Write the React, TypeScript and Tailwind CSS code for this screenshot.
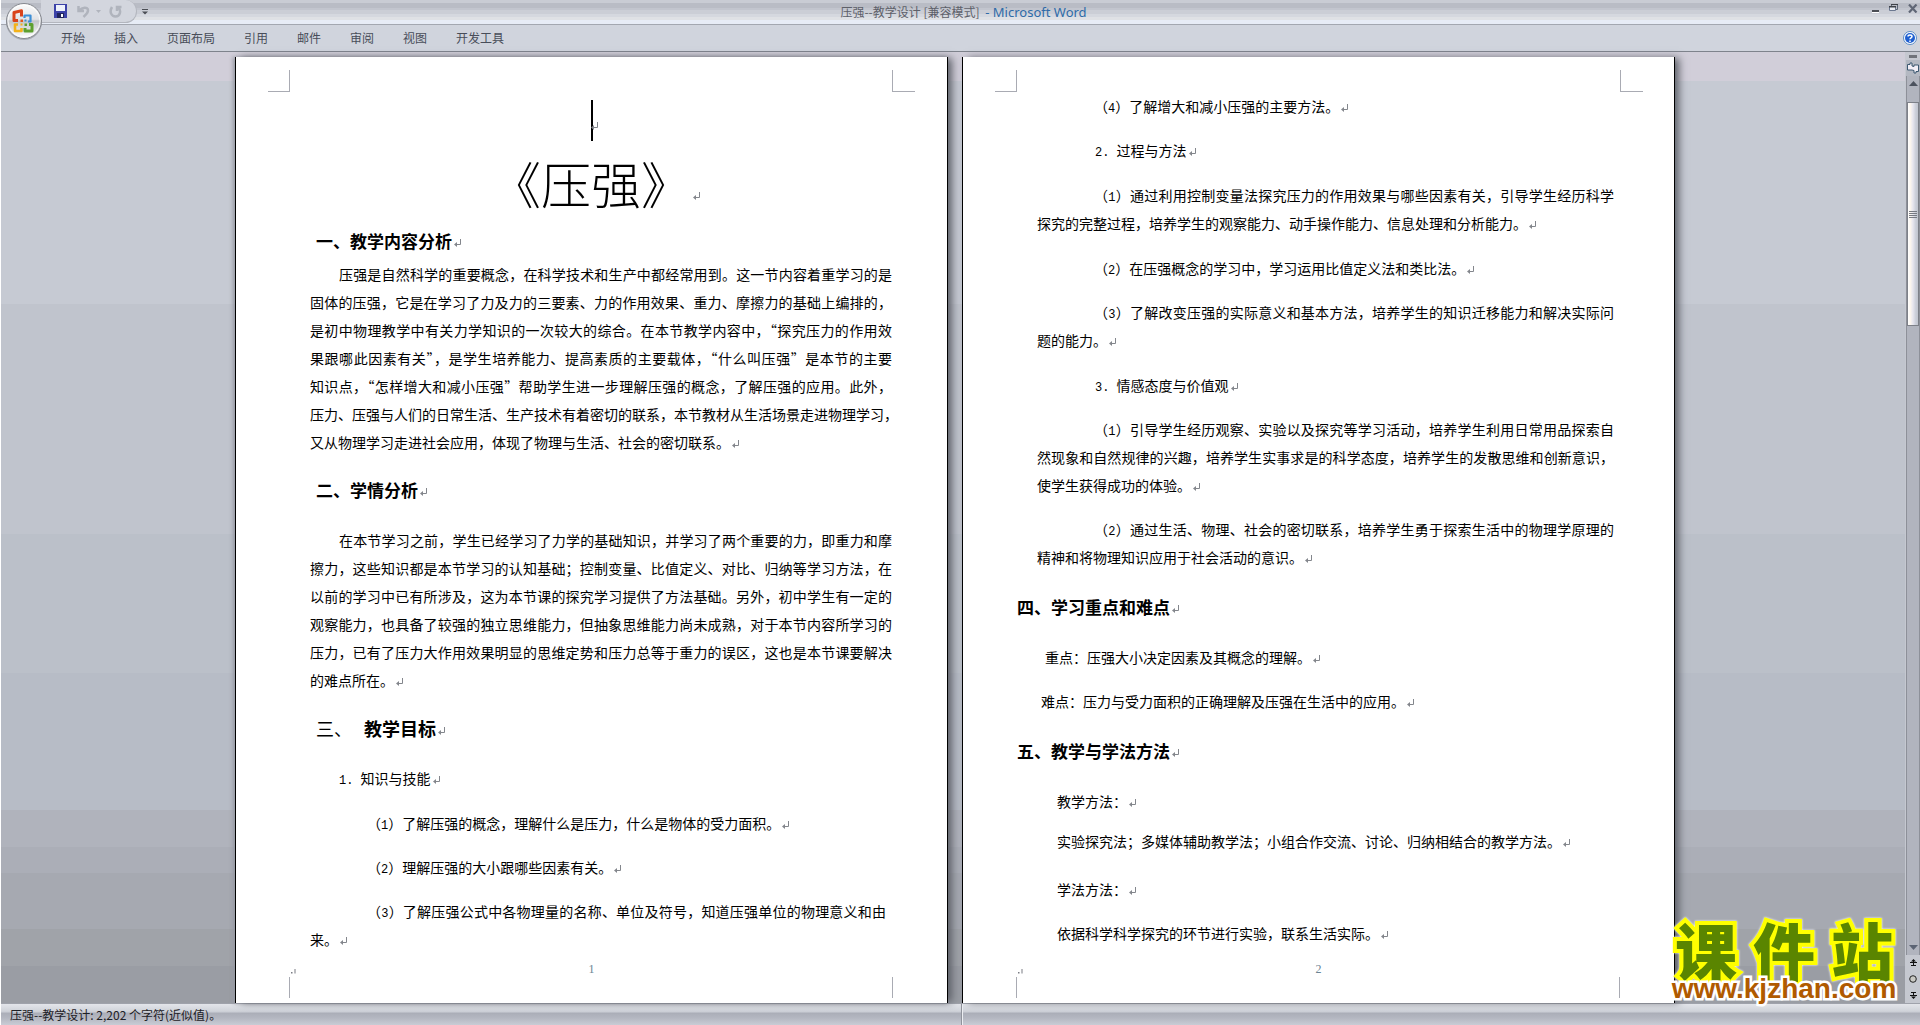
import React from 'react';

type Block = {
  kind: 'text' | 'heading' | 'split';
  className: string;
  lines: string[];
  indent?: string;
};

const TABS = ['开始', '插入', '页面布局', '引用', '邮件', '审阅', '视图', '开发工具'];

const PAGE_ONE: Block[] = [
  { kind: 'heading', className: 'pl-[6px]', lines: ['一、教学内容分析'] },
  {
    kind: 'text',
    className: 'mt-[5px]',
    indent: 'pl-[29px]',
    lines: [
      '压强是自然科学的重要概念，在科学技术和生产中都经常用到。这一节内容着重学习的是',
      '固体的压强，它是在学习了力及力的三要素、力的作用效果、重力、摩擦力的基础上编排的，',
      '是初中物理教学中有关力学知识的一次较大的综合。在本节教学内容中，“探究压力的作用效',
      '果跟哪此因素有关”，是学生培养能力、提高素质的主要载体，“什么叫压强”是本节的主要',
      '知识点，“怎样增大和减小压强”帮助学生进一步理解压强的概念，了解压强的应用。此外，',
      '压力、压强与人们的日常生活、生产技术有着密切的联系，本节教材从生活场景走进物理学习，',
      '又从物理学习走进社会应用，体现了物理与生活、社会的密切联系。',
    ],
  },
  { kind: 'heading', className: 'mt-5 pl-[6px]', lines: ['二、学情分析'] },
  {
    kind: 'text',
    className: 'mt-[22px]',
    indent: 'pl-[29px]',
    lines: [
      '在本节学习之前，学生已经学习了力学的基础知识，并学习了两个重要的力，即重力和摩',
      '擦力，这些知识都是本节学习的认知基础；控制变量、比值定义、对比、归纳等学习方法，在',
      '以前的学习中已有所涉及，这为本节课的探究学习提供了方法基础。另外，初中学生有一定的',
      '观察能力，也具备了较强的独立思维能力，但抽象思维能力尚未成熟，对于本节内容所学习的',
      '压力，已有了压力大作用效果明显的思维定势和压力总等于重力的误区，这也是本节课要解决',
      '的难点所在。',
    ],
  },
  { kind: 'split', className: 'mt-5 pl-[6px]', lines: ['三、', '教学目标'] },
  { kind: 'text', className: 'mt-[22px] pl-[29px]', lines: ['1. 知识与技能'] },
  { kind: 'text', className: 'mt-[17px] pl-[57px]', lines: ['（1）了解压强的概念，理解什么是压力，什么是物体的受力面积。'] },
  { kind: 'text', className: 'mt-4 pl-[57px]', lines: ['（2）理解压强的大小跟哪些因素有关。'] },
  {
    kind: 'text',
    className: 'mt-4 pr-[6px]',
    indent: 'pl-[57px]',
    lines: ['（3）了解压强公式中各物理量的名称、单位及符号，知道压强单位的物理意义和由', '来。'],
  },
];

const PAGE_TWO: Block[] = [
  { kind: 'text', className: 'pl-[57px]', lines: ['（4）了解增大和减小压强的主要方法。'] },
  { kind: 'text', className: 'mt-4 pl-[58px]', lines: ['2. 过程与方法'] },
  {
    kind: 'text',
    className: 'mt-[17px]',
    indent: 'pl-[57px]',
    lines: [
      '（1）通过利用控制变量法探究压力的作用效果与哪些因素有关，引导学生经历科学',
      '探究的完整过程，培养学生的观察能力、动手操作能力、信息处理和分析能力。',
    ],
  },
  { kind: 'text', className: 'mt-[17px] pl-[57px]', lines: ['（2）在压强概念的学习中，学习运用比值定义法和类比法。'] },
  {
    kind: 'text',
    className: 'mt-4',
    indent: 'pl-[57px]',
    lines: ['（3）了解改变压强的实际意义和基本方法，培养学生的知识迁移能力和解决实际问', '题的能力。'],
  },
  { kind: 'text', className: 'mt-[17px] pl-[58px]', lines: ['3. 情感态度与价值观'] },
  {
    kind: 'text',
    className: 'mt-4',
    indent: 'pl-[57px]',
    lines: [
      '（1）引导学生经历观察、实验以及探究等学习活动，培养学生利用日常用品探索自',
      '然现象和自然规律的兴趣，培养学生实事求是的科学态度，培养学生的发散思维和创新意识，',
      '使学生获得成功的体验。',
    ],
  },
  {
    kind: 'text',
    className: 'mt-4',
    indent: 'pl-[57px]',
    lines: ['（2）通过生活、物理、社会的密切联系，培养学生勇于探索生活中的物理学原理的', '精神和将物理知识应用于社会活动的意识。'],
  },
  { kind: 'heading', className: 'mt-[22px] -ml-5', lines: ['四、学习重点和难点'] },
  { kind: 'text', className: 'mt-[22px] pl-2', lines: ['重点：压强大小决定因素及其概念的理解。'] },
  { kind: 'text', className: 'mt-4 pl-1', lines: ['难点：压力与受力面积的正确理解及压强在生活中的应用。'] },
  { kind: 'heading', className: 'mt-[22px] -ml-5', lines: ['五、教学与学法方法'] },
  { kind: 'text', className: 'mt-[22px] pl-5', lines: ['教学方法：'] },
  { kind: 'text', className: 'mt-3 pl-5', lines: ['实验探究法；多媒体辅助教学法；小组合作交流、讨论、归纳相结合的教学方法。'] },
  { kind: 'text', className: 'mt-5 pl-5', lines: ['学法方法：'] },
  { kind: 'text', className: 'mt-4 pl-5', lines: ['依据科学科学探究的环节进行实验，联系生活实际。'] },
];

const Return: React.FC = () => (
  <svg className="ml-[2px] inline-block" width="7" height="9" viewBox="0 0 7 9" fill="none" stroke="#83868c" aria-hidden="true">
    <path d="M6.500 0v5.500H1" />
    <path d="M3 3v5L0 5.500z" fill="#83868c" stroke="none" />
  </svg>
);

// Latin digits are set in the half-width face
const Digits: React.FC<{ text: string }> = ({ text }) => (
  <>
    {text.split(/(\d\.? ?)/).map((part, i) =>
      /^\d/.test(part) ? (
        <span key={i} className="font-['Liberation_Mono',monospace] text-xs leading-none whitespace-pre">
          {part}
        </span>
      ) : (
        part
      )
    )}
  </>
);

const DocBlock: React.FC<{ block: Block }> = ({ block }) => {
  if (block.kind === 'heading') {
    return (
      <h2 className={`text-[17px] leading-7 font-bold whitespace-nowrap ${block.className}`}>
        {block.lines[0]}
        <Return />
      </h2>
    );
  }

  if (block.kind === 'split') {
    return (
      <h2 className={`flex items-center gap-3 text-lg leading-7 whitespace-nowrap ${block.className}`}>
        <span>{block.lines[0]}</span>
        <span className="font-bold">
          {block.lines[1]}
          <Return />
        </span>
      </h2>
    );
  }

  const last = block.lines.length - 1;
  return (
    <p className={`text-sm leading-7 whitespace-nowrap ${block.className}`}>
      {block.lines.map((line, i) => (
        <span
          key={line}
          className={`block h-7 ${i === 0 && block.indent ? block.indent : ''} ${
            i < last ? 'text-justify [text-align-last:justify]' : ''
          }`}
        >
          <Digits text={line} />
          {i === last && <Return />}
        </span>
      ))}
    </p>
  );
};

const TopMarks: React.FC<{ className: string }> = ({ className }) => (
  <div className={`flex h-[22px] justify-between ${className}`}>
    <div className="w-[22px] border-r border-b border-[#a9abb3]" />
    <div className="w-[23px] border-b border-l border-[#a9abb3]" />
  </div>
);

const PageFooter: React.FC<{ number: string }> = ({ number }) => (
  <footer className="mt-auto pr-[54px] pl-[53px]">
    <div className="flex h-4 items-center">
      <svg className="mt-1 ml-[2px]" width="5" height="5" viewBox="0 0 5 5" fill="#7a7d84" aria-hidden="true">
        <path d="M0 3h1.500v1.500H0zM3.500 0h1v4.500h-1z" />
      </svg>
      <span className="flex-1 pr-[6px] text-center font-['Liberation_Serif',serif] text-xs text-[#6b8494]">{number}</span>
    </div>
    <div className="mb-[5px] h-[21px] border-x border-[#a9abb3]" />
  </footer>
);

const OfficeButton: React.FC = () => (
  <button type="button" aria-label="Office" className="absolute top-[2px] left-1 z-10">
    <svg width="38" height="39" viewBox="0 0 38 39" fill="none">
      <defs>
        <linearGradient id="orb" x1="0" y1="0" x2="0" y2="1">
          <stop offset="0" stopColor="#fdfdfd" />
          <stop offset="0.45" stopColor="#e2e3e6" />
          <stop offset="0.5" stopColor="#c3c5ca" />
          <stop offset="1" stopColor="#ffffff" />
        </linearGradient>
      </defs>
      <circle cx="19" cy="20" r="18" fill="#8f939b" opacity="0.6" />
      <circle cx="19" cy="19" r="17.5" fill="url(#orb)" stroke="#85888f" />
      <circle cx="19" cy="19" r="16" stroke="#ffffff" opacity="0.8" />
      <path d="M13 18.500H9V10.500L16.500 8.800V14.500" stroke="#d9421a" strokeWidth="3" strokeLinejoin="round" />
      <path d="M19.500 16V13.500H25.500V19.500H23" stroke="#3d8fd6" strokeWidth="2.200" strokeLinejoin="round" />
      <path d="M13 22.500H10V29H16.500V26" stroke="#f3b21b" strokeWidth="2.600" strokeLinejoin="round" />
      <path d="M20 26V29H27V22.500H24" stroke="#5da02f" strokeWidth="3" strokeLinejoin="round" />
      <path d="M15.500 17.500h2.500v2.500H15.500z" fill="#e2571d" />
      <path d="M19.500 17.500h2v2h-2z" fill="#3d8fd6" />
      <path d="M15.500 21.500h2v2h-2z" fill="#f3b21b" />
      <path d="M19.500 21.500h2.500v2.500h-2.500z" fill="#5da02f" />
    </svg>
  </button>
);

const TitleBar: React.FC = () => (
  <div className="relative flex h-[25px] items-start justify-between border-b border-[#a3a7b0] bg-[linear-gradient(to_bottom,#c9ccd4_0_3px,#b9bcc5_3px_8px,#c2c5ce_8px_10px,#cbced6_10px_14px,#d5d8df_14px_17px,#dfe1e5_17px_20px,#e7ecf6_20px)]">
    <div className="ml-10 flex h-[23px] w-[96px] items-center rounded-r-full border-r border-b border-[#b3b6be] bg-[#d3d6de] pl-[13px]">
      <button type="button" aria-label="保存">
        <svg width="13" height="14" viewBox="0 0 13 14">
          <path d="M0 0h13v14H0z" fill="#3c42a8" />
          <path d="M2 1h9v6H2z" fill="#eef2fb" />
          <path d="M3 9h7v5H3z" fill="#20245c" />
          <path d="M7 10h2v3H7z" fill="#fff" />
        </svg>
      </button>
      <button type="button" aria-label="撤消" className="ml-[10px] flex items-center gap-[6px]">
        <svg width="13" height="13" viewBox="0 0 13 13" fill="none" stroke="#b0b4bd" strokeWidth="2.500">
          <path d="M1.500 1v5H7M2 5.500C5 2 11 1.500 11 5.500C11 8 9 9.500 6.500 12" />
        </svg>
        <svg width="5" height="3" viewBox="0 0 5 3" fill="#b0b4bd">
          <path d="M0 0h5L2.500 3z" />
        </svg>
      </button>
      <button type="button" aria-label="重复" className="ml-2">
        <svg width="13" height="13" viewBox="0 0 13 13" fill="none" stroke="#b0b4bd" strokeWidth="2.500">
          <path d="M3 2C0 7 2.500 11.500 6.500 11.500C11 11.500 12.500 6 9.500 2.500M8 6V2H12.500" />
        </svg>
      </button>
    </div>
    <button type="button" aria-label="自定义快速访问工具栏" className="mt-[9px] ml-[5px]">
      <svg width="6" height="6" viewBox="0 0 6 6" fill="#4b4e55">
        <path d="M0 0h6v1H0zM0 2.500h6L3 5.500z" />
      </svg>
    </button>
    <h1 className="flex-1 pt-[2px] pr-[93px] text-center text-xs leading-5 whitespace-pre text-[#5d6069]">
      压强--教学设计 [兼容模式]{' '}
      <span className="ml-[3px] font-['Noto_Sans',sans-serif] text-[13px] leading-none text-[#2f6ba8]">- Microsoft Word</span>
    </h1>
    <div className="flex gap-[9px] pt-1 pr-[2px]">
      <button type="button" aria-label="最小化">
        <svg width="8" height="9" viewBox="0 0 8 9">
          <path d="M0 6h7v2H0z" fill="#4b4e55" />
          <path d="M0 8h7v1H0z" fill="#fff" />
        </svg>
      </button>
      <button type="button" aria-label="还原">
        <svg width="10" height="9" viewBox="0 0 10 9" fill="none">
          <path d="M2.500 2V.5H8.500V5.500H7" stroke="#5b6474" />
          <path d="M.5 2.500H6.500V6.500H.5z" fill="#e9ecf3" stroke="#6c7890" />
          <path d="M0 2h7v1.500H0zM2 0h7v1H2z" fill="#3f4248" />
        </svg>
      </button>
      <button type="button" aria-label="关闭">
        <svg width="10" height="9" viewBox="0 0 10 9" fill="none" stroke="#5f6675" strokeWidth="2.200">
          <path d="M1 .5L8.500 8.500M8.500 .5L1 8.500" />
        </svg>
      </button>
    </div>
  </div>
);

const ScrollBar: React.FC = () => (
  <aside className="flex w-[15px] shrink-0 flex-col bg-[#c5c8d0] pl-px">
    <div className="flex h-2 items-end justify-center">
      <div className="mb-[2px] h-[3px] w-2 bg-[#70737a]" />
    </div>
    <button type="button" aria-label="标尺" className="flex h-4 items-center justify-center bg-[#b4b8c2]">
      <svg width="12" height="12" viewBox="0 0 12 12" fill="#f2eef6" stroke="#3d5871">
        <path d="M.5 2.500H3V1H5V4L7 4.500V3H11.500V9.500H9V11H7V8.500L5 8H.5z" />
      </svg>
    </button>
    <div className="flex flex-1 flex-col border-x border-[#8d9099] bg-[#b1b4be]">
      <button type="button" aria-label="向上" className="flex h-[26px] justify-center pt-[5px]">
        <svg width="9" height="5" viewBox="0 0 9 5" fill="#4c525e">
          <path d="M0 5h9L4.500 0z" />
        </svg>
      </button>
      <div className="flex h-[224px] flex-col items-center justify-center gap-px border border-[#7d8088] bg-[linear-gradient(to_right,#ffffff,#fbf5ee_25%,#e6e5ee_50%,#cdd0da_75%,#c0c4ce)]">
        <div className="h-px w-2 bg-[#777a82]" />
        <div className="h-px w-2 bg-[#777a82]" />
        <div className="h-px w-2 bg-[#777a82]" />
        <div className="h-px w-2 bg-[#777a82]" />
      </div>
      <button type="button" aria-label="向下" className="mt-auto flex h-3 justify-center pt-[2px]">
        <svg width="9" height="5" viewBox="0 0 9 5" fill="#5c6474">
          <path d="M0 0h9L4.500 5z" />
        </svg>
      </button>
    </div>
    <div className="flex h-12 flex-col items-center justify-around">
      <button type="button" aria-label="前一页">
        <svg width="7" height="7" viewBox="0 0 7 7" fill="#111">
          <path d="M3.500 0L6 2.500H1zM3 2h1v4H3zM0 3h7v1H0zM1 6h5v1H1z" />
        </svg>
      </button>
      <button type="button" aria-label="选择浏览对象">
        <svg width="8" height="8" viewBox="0 0 8 8">
          <circle cx="4" cy="4" r="3.300" fill="#c9c9c4" stroke="#222" />
        </svg>
      </button>
      <button type="button" aria-label="下一页">
        <svg width="7" height="7" viewBox="0 0 7 7" fill="#111">
          <path d="M3.500 7L6 4.500H1zM3 1h1v4H3zM0 3h7v1H0zM1 0h5v1H1z" />
        </svg>
      </button>
    </div>
  </aside>
);

const Watermark: React.FC = () => (
  <div className="pointer-events-none absolute right-4 bottom-0 flex w-[240px] flex-col items-center whitespace-nowrap">
    <div className="flex gap-4 text-[62px] leading-[52px] font-black text-[#5a8500] drop-shadow-[0_0_1px_#ffffff] [-webkit-text-stroke:8px_#ffff00] [paint-order:stroke_fill]">
      <span>课</span>
      <span>件</span>
      <span>站</span>
    </div>
    <div className="relative font-['Liberation_Sans',sans-serif] text-[28px] leading-7 font-bold text-[#b05a00] [-webkit-text-stroke:5px_#ffffff] [paint-order:stroke_fill]">
      www.kjzhan.com
    </div>
  </div>
);

export default function App() {
  return (
    <div className="flex min-h-screen flex-col border-l border-white bg-[#d0d4dd] font-['Noto_Sans_CJK_SC',sans-serif] text-black">
      <header className="relative">
        <OfficeButton />
        <TitleBar />
        <nav className="flex h-[27px] items-center border-b border-[#7e838c] pr-[3px] pl-[60px]">
          <div className="flex gap-[29px]">
            {TABS.map((tab) => (
              <button key={tab} type="button" className="text-xs whitespace-nowrap text-[#484d59]">
                {tab}
              </button>
            ))}
          </div>
          <button type="button" aria-label="帮助" className="ml-auto">
            <svg width="14" height="14" viewBox="0 0 14 14" fill="none">
              <circle cx="7" cy="7" r="6.500" fill="#fff" stroke="#5b8bc4" />
              <circle cx="7" cy="7" r="5" fill="#1f5fd0" />
              <path d="M5 5.500C5 3.500 9 3.500 9 5.500C9 6.800 7 6.800 7 8.200M7 9.500V11" stroke="#fff" strokeWidth="1.500" />
            </svg>
          </button>
        </nav>
      </header>

      <main className="relative flex flex-1">
        <div className="flex flex-1 justify-center gap-[14px] bg-[linear-gradient(to_bottom,#d1ced9_0_3%,#c6cad3_3%_26.5%,#c0c4cd_26.5%_50.7%,#bbc0c9_50.7%_65.3%,#b7bcc6_65.3%_79.7%,#b0b3bc_79.7%_83.6%,#abaeb7_83.6%_86.3%,#a6a9b1_86.3%_92.2%,#a0a3a9_92.2%_96.1%,#9a9da4_96.1%)] pt-[5px] pl-1">
          {/* Page 1 */}
          <article className="flex w-full max-w-[713px] flex-col border-x border-black bg-white shadow-[5px_0_8px_-1px_#5d6068,-2px_0_4px_#9a9da6]">
            <TopMarks className="mt-[13px] mr-[32px] ml-[32px]" />
            <div className="flex flex-col pr-[55px] pl-[74px]">
              <div className="mt-[7px] flex h-[42px] items-center justify-center pr-[14px]">
                <div className="h-[41px] w-[2px] bg-black" />
                <div className="-ml-1 flex pt-3">
                  <Return />
                </div>
              </div>
              <div className="mt-[10px] mb-[14px] flex h-[62px] items-center justify-center pr-5 text-[50px] leading-none font-light whitespace-nowrap">
                《压强》
                <div className="flex w-0 pt-7">
                  <div className="flex">
                    <Return />
                  </div>
                </div>
              </div>
              {PAGE_ONE.map((block) => (
                <DocBlock key={block.lines[0]} block={block} />
              ))}
            </div>
            <PageFooter number="1" />
          </article>

          {/* Page 2 */}
          <article className="flex w-full max-w-[713px] flex-col border-x border-black bg-white shadow-[5px_0_8px_-1px_#5d6068]">
            <TopMarks className="mt-[13px] mr-[31px] ml-[32px]" />
            <div className="pr-[60px] pl-[74px]">
              {PAGE_TWO.map((block) => (
                <DocBlock key={block.lines[0]} block={block} />
              ))}
            </div>
            <PageFooter number="2" />
          </article>
        </div>
        <ScrollBar />
        <Watermark />
      </main>

      <footer className="flex h-[22px] items-center border-t border-[#9fa2ab] bg-[linear-gradient(to_bottom,#e3e5ea,#cfd2d9_35%,#acafb9_45%,#b3b6c0_65%,#c9ccd5)] text-xs text-[#1d2026]">
        <div className="w-1/2 pl-[9px]">压强--教学设计: 2,202 个字符(近似值)。</div>
        <div className="h-full w-1/2 border-l border-[#90939c] shadow-[inset_1px_0_0_#eceef2]" />
      </footer>
    </div>
  );
}
